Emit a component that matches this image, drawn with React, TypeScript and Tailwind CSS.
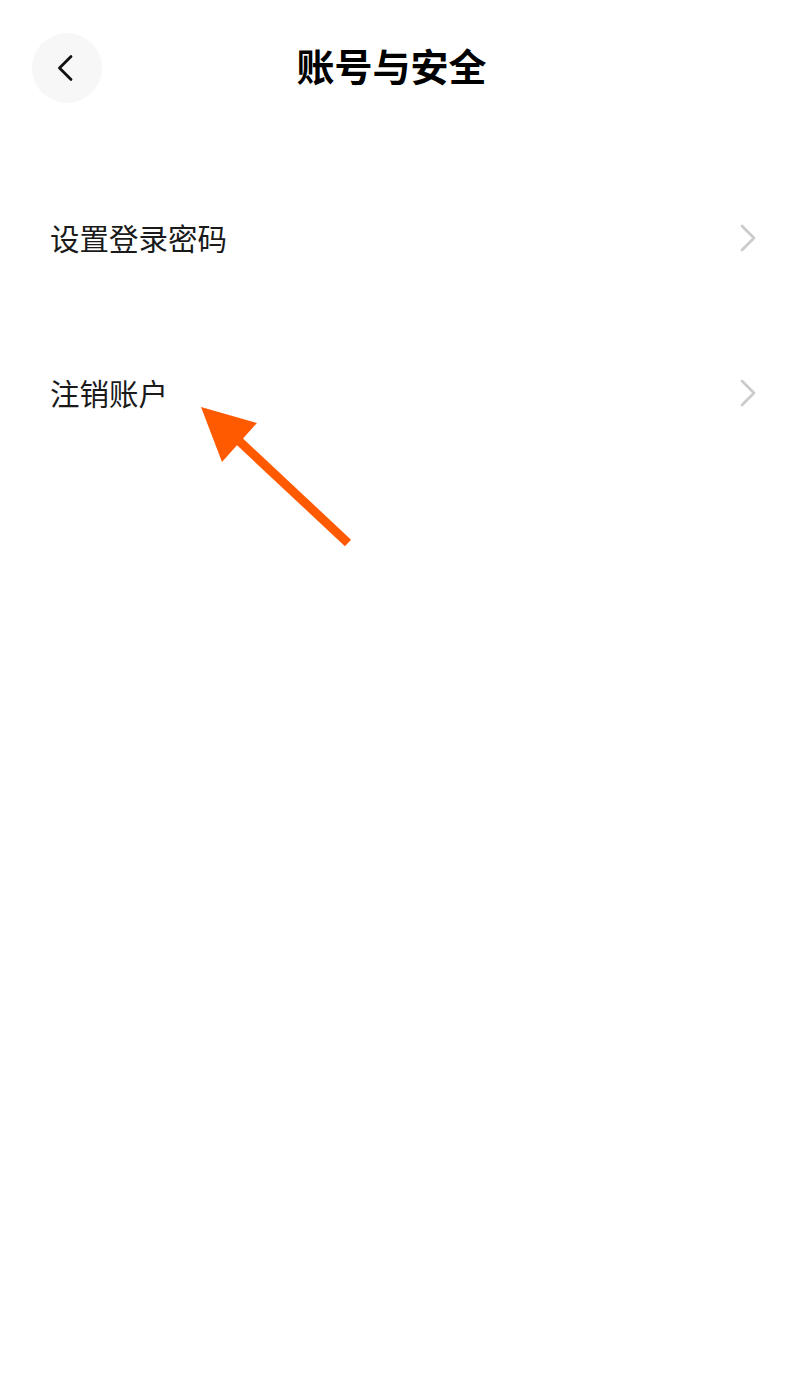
const rows = ['设置登录密码', '注销账户'];

function Chevron({ className, points }: { className: string; points: string }) {
  return (
    <svg width="20" height="28" viewBox="0 0 20 28" className={className}>
      <polyline points={points} fill="none" stroke="currentColor" strokeWidth="2.8" strokeLinecap="round" strokeLinejoin="round" />
    </svg>
  );
}

export default function App() {
  return (
    <div className="relative w-[789px] h-[1383px] bg-white overflow-hidden font-['Noto_Sans_CJK_SC',sans-serif]">
      {/* Header */}
      <div className="relative h-[136px] flex items-center justify-center pr-[6px]">
        <div className="absolute left-[32px] top-[33px] w-[70px] h-[70px] rounded-full bg-[#f7f7f7] flex items-center justify-center">
          <Chevron className="text-[#111] -translate-x-[1px]" points="15,2.5 3.5,14 15,25.5" />
        </div>
        <h1 className="text-[38px] font-bold text-black leading-none -mt-[7px]">账号与安全</h1>
      </div>

      {/* List */}
      <div className="pt-[24px]">
        {rows.map(label => (
          <div key={label} className="h-[155px] flex items-center justify-between pl-[50px] pr-[32px]">
            <span className="text-[29.5px] text-[#1a1a1a] leading-none">{label}</span>
            <Chevron className="text-[#cbcbcb]" points="5,2 17,14 5,26" />
          </div>
        ))}
      </div>

      {/* Annotation arrow */}
      <svg className="absolute left-0 top-0" width="789" height="600" viewBox="0 0 789 600">
        <line x1="348" y1="543" x2="238" y2="440" stroke="#ff5a00" strokeWidth="9" />
        <polygon points="201,407 257,423 222,462" fill="#ff5a00" />
      </svg>
    </div>
  );
}
